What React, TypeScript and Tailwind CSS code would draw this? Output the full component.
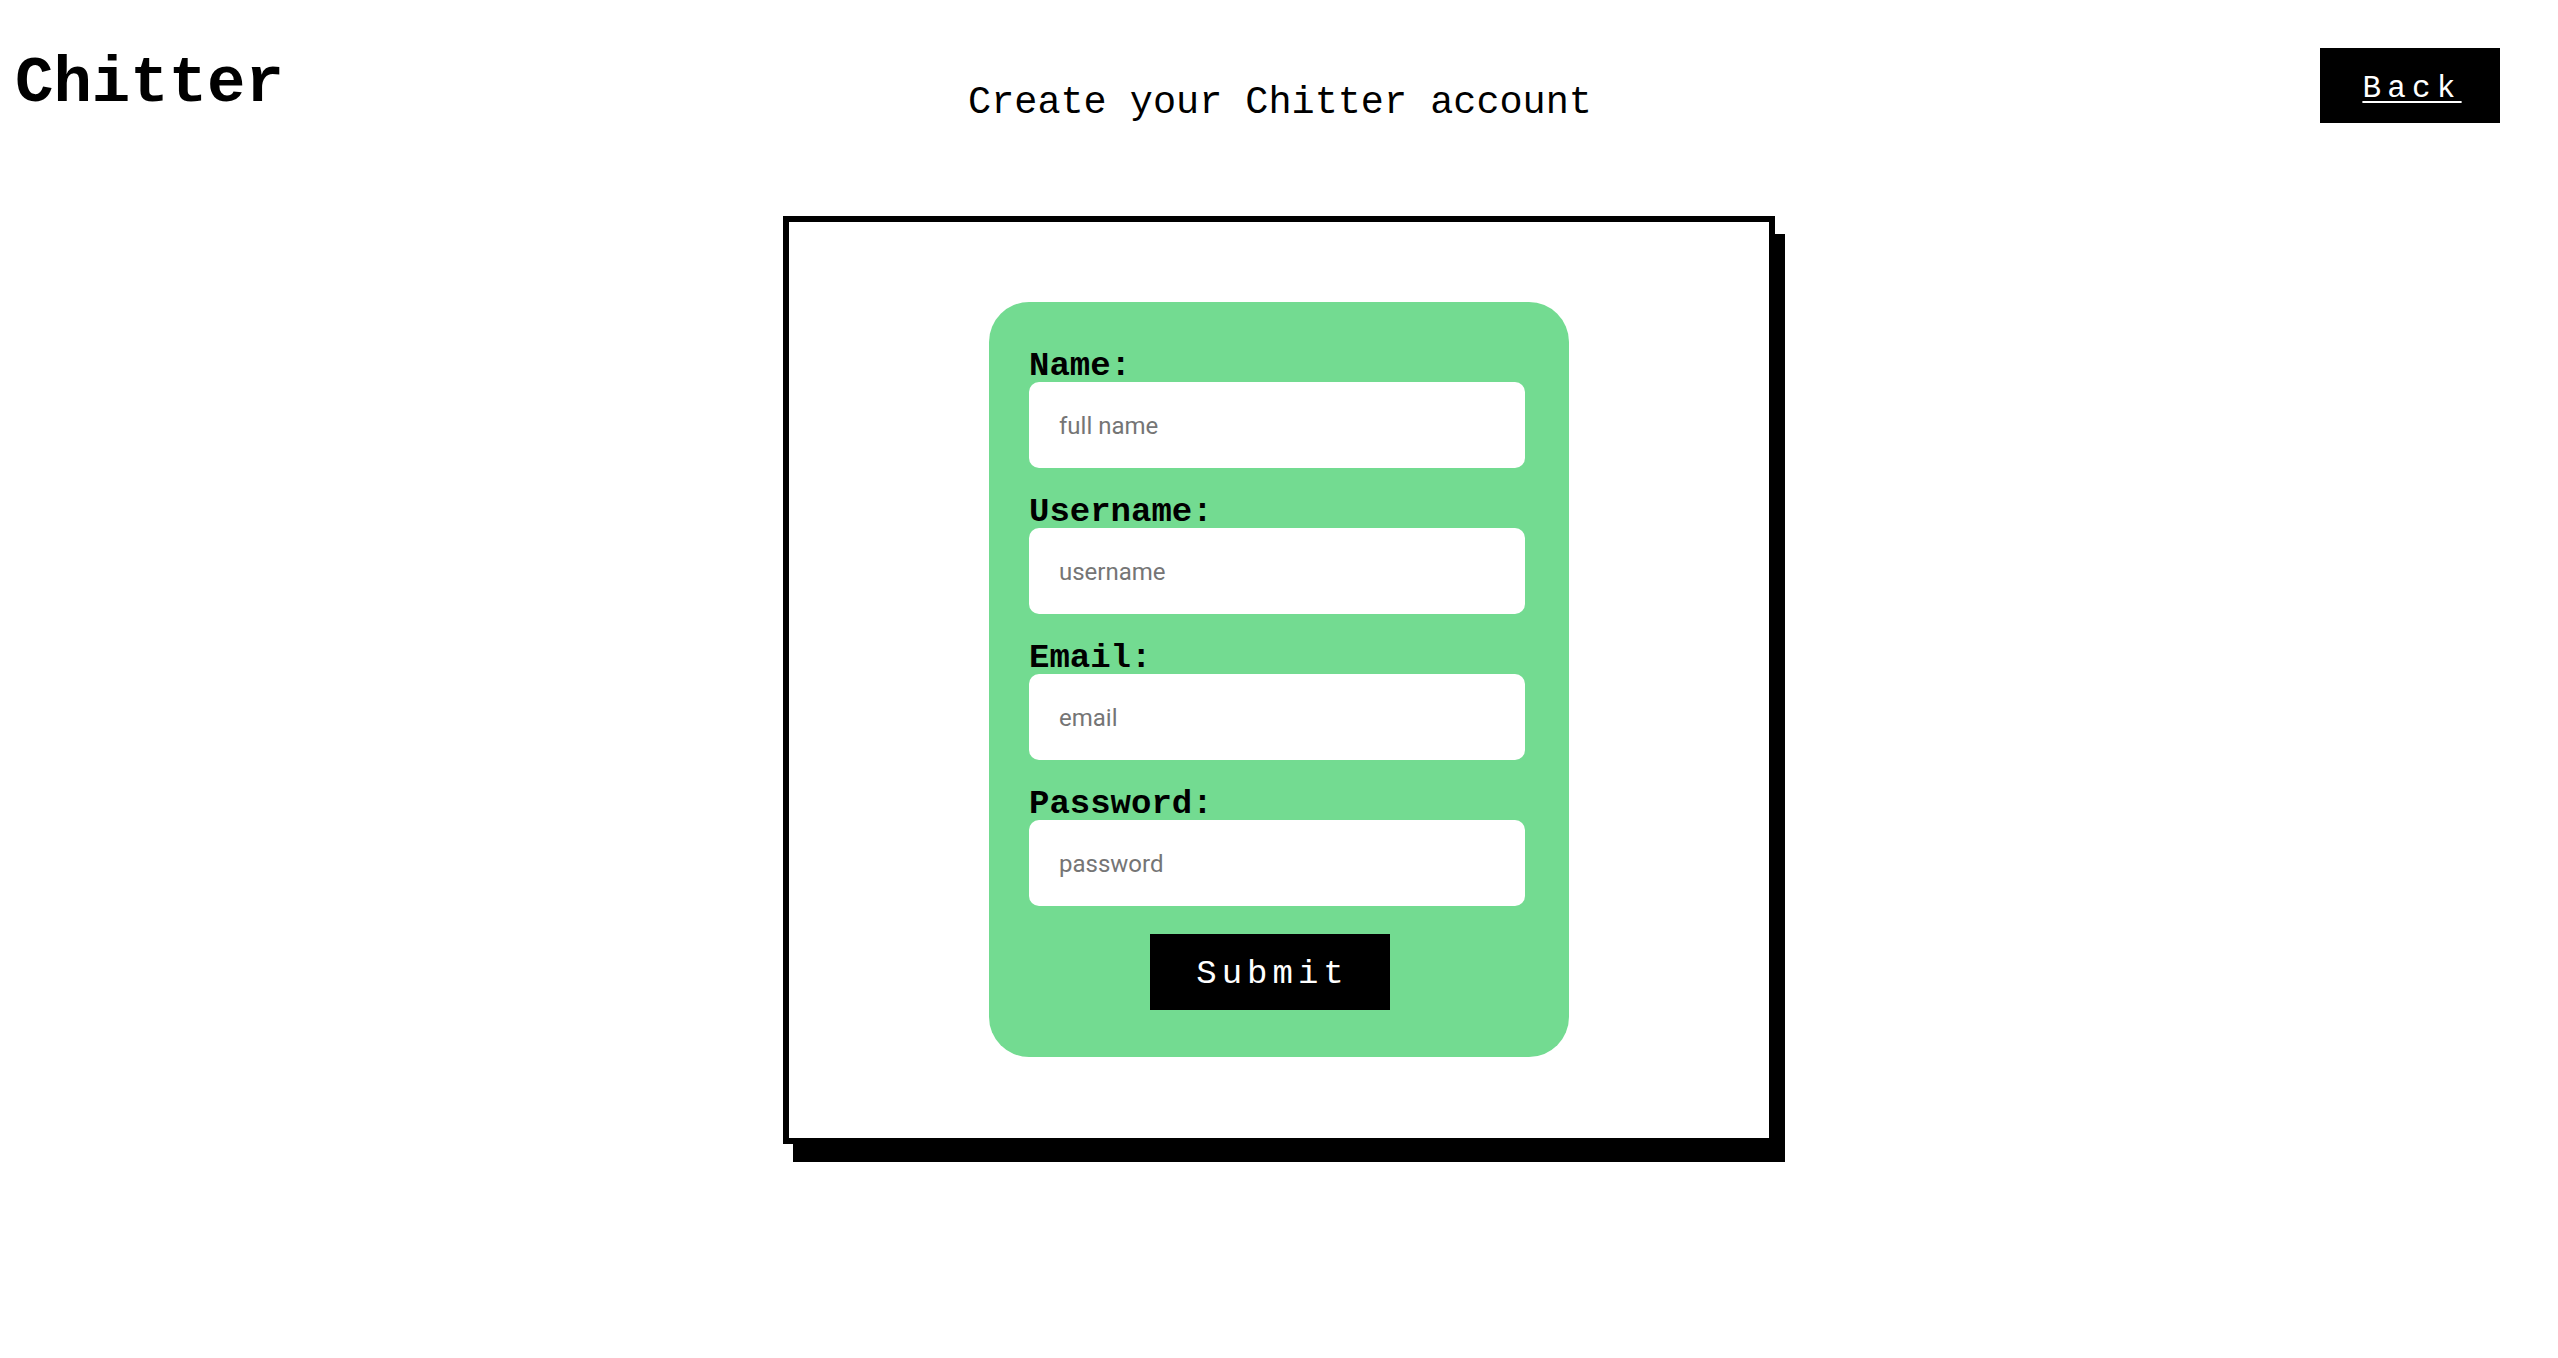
import React from "react";

const mono = { fontFamily: '"Liberation Mono", "Courier New", Courier, monospace' };

function Field({ label, placeholder, type = "text" }: { label: string; placeholder: string; type?: string }) {
  return (
    <div className="flex flex-col">
      <label className="block h-[34px] text-[34px] leading-[36px] font-bold text-black" style={mono}>
        {label}
      </label>
      <input
        type={type}
        placeholder={placeholder}
        className="w-[496px] h-[86px] rounded-[10px] bg-white px-[30px] pt-[2px] text-[24px] text-black placeholder:text-[#757575] outline-none border-0 font-['Roboto',sans-serif]"
      />
    </div>
  );
}

export default function App() {
  return (
    <div className="min-h-screen w-full bg-white">
      <header className="grid grid-cols-[1fr_auto_1fr] h-[216px]">
        <div className="justify-self-start">
          <h1 className="mt-[52px] pl-[15px] text-[64px] leading-[64px] font-bold text-black" style={mono}>
            Chitter
          </h1>
        </div>
        <div>
          <h2 className="mt-[84px] pl-[2px] text-[38.5px] leading-[38.5px] font-normal text-black whitespace-nowrap" style={mono}>
            Create your Chitter account
          </h2>
        </div>
        <div className="justify-self-end">
          <button
            className="mt-[48px] mr-[58px] h-[75px] w-[180px] bg-black flex items-center justify-center text-white text-[31px] leading-none underline underline-offset-[4px] decoration-[2px] tracking-[0.2em] pl-[4px] pt-[5px]"
            style={mono}
          >
            Back
          </button>
        </div>
      </header>

      <main className="w-[992px] mx-auto border-[6px] border-black shadow-[10px_18px_0_0_#000] bg-white pt-[80px] pb-[81px]">
        <form className="w-[580px] mx-auto bg-[#73DB91] rounded-[40px] pt-[46px] pb-[47px] px-[40px] flex flex-col gap-[26px]">
          <Field label="Name:" placeholder="full name" />
          <Field label="Username:" placeholder="username" />
          <Field label="Email:" placeholder="email" type="email" />
          <div className="flex flex-col">
            <Field label="Password:" placeholder="password" type="password" />
            <button
              type="button"
              className="mt-[28px] ml-[121px] w-[240px] h-[76px] bg-black text-white text-[34px] leading-none tracking-[5px] pl-[5px] pt-[3px] flex items-center justify-center"
              style={mono}
            >
              Submit
            </button>
          </div>
        </form>
      </main>
    </div>
  );
}
